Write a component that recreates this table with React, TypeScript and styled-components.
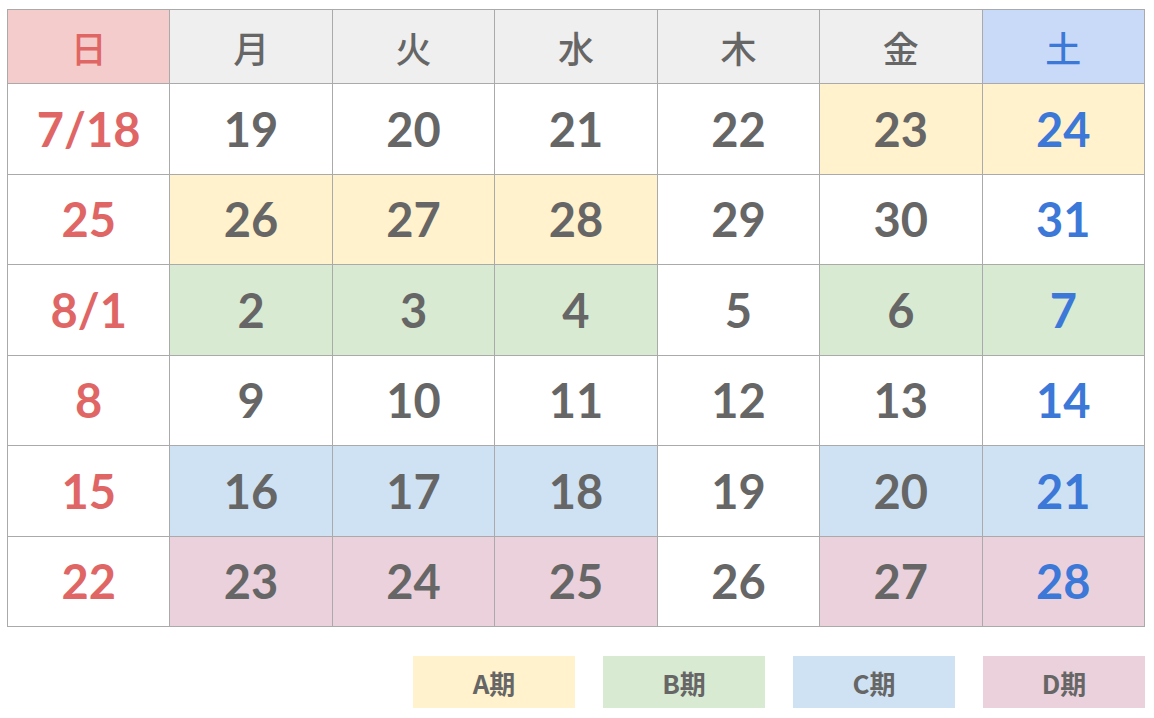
import styled, { createGlobalStyle } from 'styled-components';

type Period = 'A' | 'B' | 'C' | 'D' | '';
type Tone = 'sun' | 'sat' | 'day';

const periodBg: Record<string, string> = {
  A: '#fff2cc',
  B: '#d9ead3',
  C: '#cfe2f3',
  D: '#ead1dc',
  '': '#ffffff',
};

const toneColor: Record<Tone, string> = {
  sun: '#e06666',
  sat: '#3c78d8',
  day: '#666666',
};

const headerBg: Record<Tone, string> = {
  sun: '#f4cccc',
  sat: '#c9daf8',
  day: '#efefef',
};

const weekdays: { label: string; tone: Tone }[] = [
  { label: '日', tone: 'sun' },
  { label: '月', tone: 'day' },
  { label: '火', tone: 'day' },
  { label: '水', tone: 'day' },
  { label: '木', tone: 'day' },
  { label: '金', tone: 'day' },
  { label: '土', tone: 'sat' },
];

// each row: [label, period]
const weeks: [string, Period][][] = [
  [['7/18', ''], ['19', ''], ['20', ''], ['21', ''], ['22', ''], ['23', 'A'], ['24', 'A']],
  [['25', ''], ['26', 'A'], ['27', 'A'], ['28', 'A'], ['29', ''], ['30', ''], ['31', '']],
  [['8/1', ''], ['2', 'B'], ['3', 'B'], ['4', 'B'], ['5', ''], ['6', 'B'], ['7', 'B']],
  [['8', ''], ['9', ''], ['10', ''], ['11', ''], ['12', ''], ['13', ''], ['14', '']],
  [['15', ''], ['16', 'C'], ['17', 'C'], ['18', 'C'], ['19', ''], ['20', 'C'], ['21', 'C']],
  [['22', ''], ['23', 'D'], ['24', 'D'], ['25', 'D'], ['26', ''], ['27', 'D'], ['28', 'D']],
];

const legend: Period[] = ['A', 'B', 'C', 'D'];

const GlobalStyle = createGlobalStyle`
  html, body {
    margin: 0;
    padding: 0;
    background: #ffffff;
  }
`;

const Page = styled.div`
  width: 1154px;
  height: 718px;
  box-sizing: border-box;
  padding: 9px 9px 0 7px;
  display: flex;
  flex-direction: column;
`;

const Table = styled.table`
  width: 100%;
  border-collapse: collapse;
  table-layout: fixed;
`;

const HeadCell = styled.th<{ $tone: Tone }>`
  height: 73px;
  padding: 0;
  border: 1px solid #aaaaaa;
  background: ${({ $tone }) => headerBg[$tone]};
  color: ${({ $tone }) => toneColor[$tone]};
  font-family: 'Noto Sans CJK JP', 'Noto Sans', sans-serif;
  font-size: 36px;
  font-weight: 500;
  line-height: 1;
  text-align: center;
  vertical-align: middle;
`;

const DayCell = styled.td<{ $tone: Tone; $period: Period }>`
  height: 89.5px;
  padding: 0;
  border: 1px solid #aaaaaa;
  background: ${({ $period }) => periodBg[$period]};
  color: ${({ $tone }) => toneColor[$tone]};
  font-family: Lato, 'Liberation Sans', sans-serif;
  font-size: 47px;
  font-weight: 700;
  text-align: center;
  vertical-align: middle;
`;

const Legend = styled.div`
  display: flex;
  justify-content: flex-end;
  gap: 28px;
  margin-top: 29px;
`;

const LegendBox = styled.div<{ $period: Period }>`
  width: 162px;
  height: 52px;
  display: flex;
  align-items: center;
  justify-content: center;
  background: ${({ $period }) => periodBg[$period]};
  color: #666666;
  font-family: 'Noto Sans CJK JP', sans-serif;
  font-size: 26px;
  font-weight: 700;
`;

const App = () => {
  return (
    <>
      <GlobalStyle />
      <Page>
        <Table>
          <thead>
            <tr>
              {weekdays.map((d) => (
                <HeadCell key={d.label} $tone={d.tone}>
                  {d.label}
                </HeadCell>
              ))}
            </tr>
          </thead>
          <tbody>
            {weeks.map((week, i) => (
              <tr key={i}>
                {week.map(([label, period], j) => (
                  <DayCell key={j} $tone={weekdays[j].tone} $period={period}>
                    {label}
                  </DayCell>
                ))}
              </tr>
            ))}
          </tbody>
        </Table>
        <Legend>
          {legend.map((p) => (
            <LegendBox key={p} $period={p}>
              {p}期
            </LegendBox>
          ))}
        </Legend>
      </Page>
    </>
  );
};

export default App;
